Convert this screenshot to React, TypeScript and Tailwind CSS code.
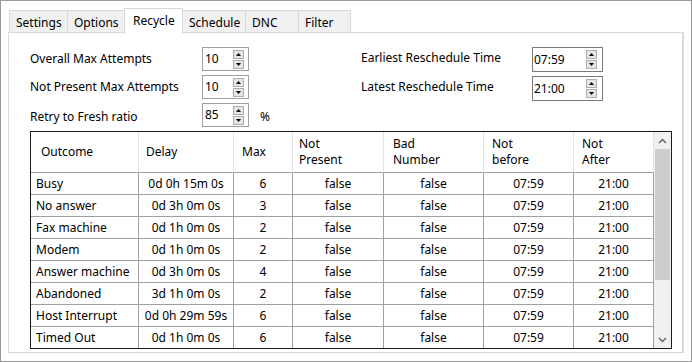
import React from "react";

const rows: string[][] = [
  ["Busy", "0d 0h 15m 0s", "6"],
  ["No answer", "0d 3h 0m 0s", "3"],
  ["Fax machine", "0d 1h 0m 0s", "2"],
  ["Modem", "0d 1h 0m 0s", "2"],
  ["Answer machine", "0d 3h 0m 0s", "4"],
  ["Abandoned", "3d 1h 0m 0s", "2"],
  ["Host Interrupt", "0d 0h 29m 59s", "6"],
  ["Timed Out", "0d 1h 0m 0s", "6"],
];

function SpinBtns() {
  return (
    <div className="flex flex-col gap-px">
      <div className="w-[11px] h-[9px] border border-[#adadad] bg-[#e5e5e5] flex items-center justify-center">
        <svg width="5" height="3" viewBox="0 0 5 3">
          <path d="M0 3 L2.5 0 L5 3Z" fill="#000" />
        </svg>
      </div>
      <div className="w-[11px] h-[9px] border border-[#adadad] bg-[#e5e5e5] flex items-center justify-center">
        <svg width="5" height="3" viewBox="0 0 5 3">
          <path d="M0 0 L2.5 3 L5 0Z" fill="#000" />
        </svg>
      </div>
    </div>
  );
}

function NumSpin({ value }: { value: string }) {
  return (
    <div className="w-[47px] h-[24px] border border-[#a0a0a0] bg-white flex items-center pl-[2px] pr-[4px]">
      <span className="flex-1 leading-none">{value}</span>
      <SpinBtns />
    </div>
  );
}

function TimeSpin({ value }: { value: string }) {
  return (
    <div className="w-[71px] h-[25px] border border-[#7a7a7a] bg-white flex items-center pl-px pr-[5px]">
      <span className="flex-1 leading-none pt-[1px]">{value}</span>
      <SpinBtns />
    </div>
  );
}

const tabs = [
  { label: "Settings", w: "w-[59px]" },
  { label: "Options", w: "w-[58px]" },
  { label: "Recycle", w: "w-[59px]", active: true },
  { label: "Schedule", w: "w-[64px]" },
  { label: "DNC", w: "w-[54px]" },
  { label: "Filter", w: "w-[53px]" },
];

export default function App() {
  return (
    <div className="w-[692px] h-[362px] bg-white border border-[#9a9a9a] overflow-hidden font-['Noto_Sans',sans-serif] text-[12px] text-black">
      <div className="pt-[7px]">
        {/* tab strip */}
        <div className="flex items-end h-[24px] pl-[8px] relative z-10">
          {tabs.map((t, i) =>
            t.active ? (
              <div
                key={t.label}
                className={`${t.w} -ml-px h-[26px] -mb-[2px] bg-white border-t border-l border-r border-[#d9d9d9] pl-[8px] pt-[4px] leading-[16px]`}
              >
                {t.label}
              </div>
            ) : (
              <div
                key={t.label}
                className={`${t.w} ${i === 0 ? "" : "-ml-px"} h-[22px] bg-[#f0f0f0] border-t border-l border-r border-[#d9d9d9] pl-[6px] pt-[4px] leading-[16px]`}
              >
                {t.label}
              </div>
            )
          )}
        </div>

        {/* panel */}
        <div className="ml-[7px] w-[676px] h-[321px] border border-[#d9d9d9] border-r-2 pl-[21px] pt-[14px]">
          <div className="flex">
            <div className="w-[331px] flex flex-col gap-[4px]">
              <div className="flex items-center h-[24px]">
                <span className="w-[172px]">Overall Max Attempts</span>
                <NumSpin value="10" />
              </div>
              <div className="flex items-center h-[24px]">
                <span className="w-[172px]">Not Present Max Attempts</span>
                <NumSpin value="10" />
              </div>
              <div className="flex items-center h-[24px]">
                <span className="w-[172px] pt-[4px]">Retry to Fresh ratio</span>
                <NumSpin value="85" />
                <span className="ml-[11px] pt-[4px]">%</span>
              </div>
            </div>
            <div className="flex flex-col gap-[4px]">
              <div className="flex items-center h-[25px]">
                <span className="w-[171px] pb-[4px]">Earliest Reschedule Time</span>
                <TimeSpin value="07:59" />
              </div>
              <div className="flex items-center h-[25px]">
                <span className="w-[171px] pb-[4px]">Latest Reschedule Time</span>
                <TimeSpin value="21:00" />
              </div>
            </div>
          </div>

          {/* table */}
          <div className="mt-[4px] w-[642px] h-[218px] border border-[#1a1a1a] flex overflow-hidden">
            <div className="w-[623px] flex flex-col">
              <div className="grid grid-cols-[108px_95px_59px_91px_100px_90px_80px] h-[41px] shrink-0 leading-[16px]">
                <div className="border-r border-b border-r-[#e3e3e3] border-b-[#a0a0a0] pl-[10px] flex items-center">Outcome</div>
                <div className="border-r border-b border-r-[#e3e3e3] border-b-[#a0a0a0] pl-[7px] flex items-center">Delay</div>
                <div className="border-r border-b border-r-[#e3e3e3] border-b-[#a0a0a0] pl-[8px] flex items-center">Max</div>
                <div className="border-r border-b border-r-[#e3e3e3] border-b-[#a0a0a0] pl-[6px] flex items-center">Not<br />Present</div>
                <div className="border-r border-b border-r-[#e3e3e3] border-b-[#a0a0a0] pl-[9px] flex items-center">Bad<br />Number</div>
                <div className="border-r border-b border-r-[#e3e3e3] border-b-[#a0a0a0] pl-[8px] flex items-center">Not<br />before</div>
                <div className="border-r border-b border-r-[#e3e3e3] border-b-[#a0a0a0] pl-[8px] flex items-center">Not<br />After</div>
              </div>
              {rows.map((r) => (
                <div
                  key={r[0]}
                  className="grid grid-cols-[108px_95px_59px_91px_100px_90px_80px] h-[22px] shrink-0"
                >
                  <div className="border-r border-b border-[#a0a0a0] pl-[5px] flex items-center">{r[0]}</div>
                  <div className="border-r border-b border-[#a0a0a0] flex items-center justify-center">{r[1]}</div>
                  <div className="border-r border-b border-[#a0a0a0] flex items-center justify-center">{r[2]}</div>
                  <div className="border-r border-b border-[#a0a0a0] flex items-center justify-center">false</div>
                  <div className="border-r border-b border-[#a0a0a0] flex items-center justify-center">false</div>
                  <div className="border-r border-b border-[#a0a0a0] flex items-center justify-center">07:59</div>
                  <div className="border-r border-b border-[#a0a0a0] flex items-center justify-center">21:00</div>
                </div>
              ))}
            </div>
            {/* scrollbar */}
            <div className="w-[17px] bg-[#f0f0f0] flex flex-col items-center">
              <div className="h-[17px] w-full flex items-center justify-center">
                <svg width="9" height="6" viewBox="0 0 9 6">
                  <path d="M1 5 L4.5 1.5 L8 5" fill="none" stroke="#606060" strokeWidth="1.3" />
                </svg>
              </div>
              <div className="h-[131px] w-[15px] bg-[#cdcdcd]" />
              <div className="flex-1" />
              <div className="h-[17px] w-full flex items-center justify-center">
                <svg width="9" height="6" viewBox="0 0 9 6">
                  <path d="M1 1 L4.5 4.5 L8 1" fill="none" stroke="#606060" strokeWidth="1.3" />
                </svg>
              </div>
            </div>
          </div>
        </div>
      </div>
    </div>
  );
}
